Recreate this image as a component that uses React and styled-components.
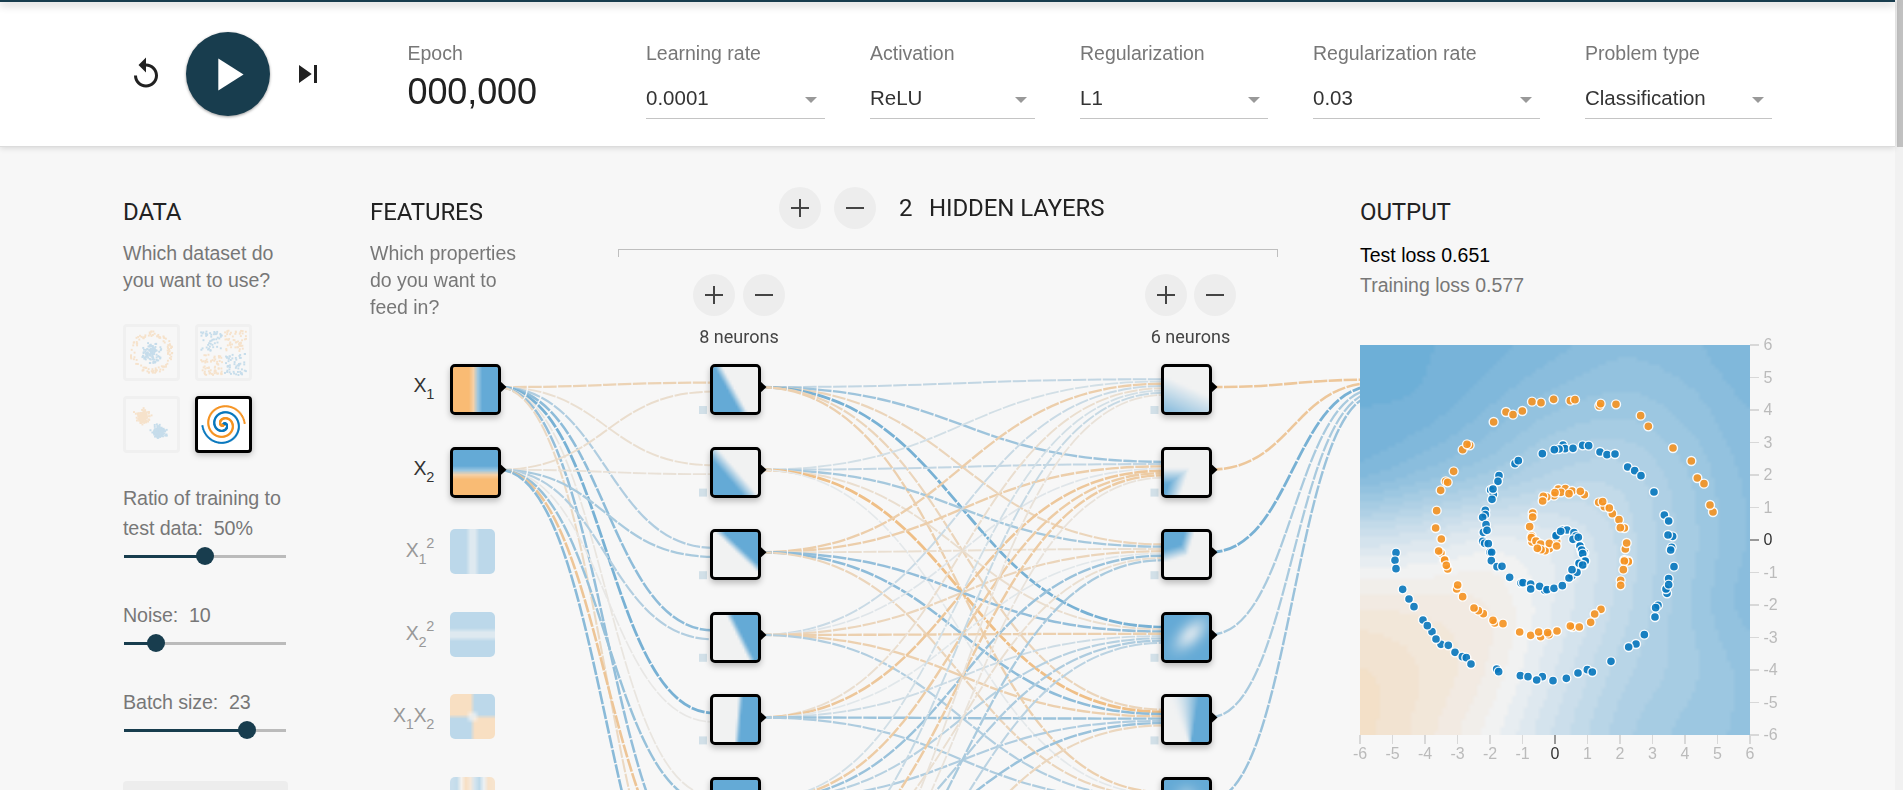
import React, { useLayoutEffect, useRef } from "react";
import styled, { createGlobalStyle } from "styled-components";

const SANS = '"Liberation Sans", Arial, sans-serif';
const ROBOTO = 'Roboto, "Liberation Sans", sans-serif';
const DARK = "#183d4e";

const GlobalStyle = createGlobalStyle`
  *, *::before, *::after { box-sizing: border-box; }
  html, body { margin: 0; padding: 0; overflow: hidden; }
  body { background: #f7f7f7; font-family: ${SANS}; color: rgba(0, 0, 0, 0.87); }
`;

/* ---------- colour helpers ---------- */
const ORANGE = [245, 147, 34];
const GREY = [232, 234, 235];
const BLUE = [8, 119, 189];
const clamp = (v, a = -1, b = 1) => Math.max(a, Math.min(b, v));
function ramp(v) {
  const end = v < 0 ? ORANGE : BLUE;
  const t = Math.abs(clamp(v));
  return GREY.map((c, i) => Math.round(c + (end[i] - c) * t));
}
const rgb = (c) => `rgb(${c.join(",")})`;

/* ---------- page frame ---------- */
const Page = styled.div`
  display: flex;
  width: 1903px;
  height: 790px;
  overflow: hidden;
`;
const Content = styled.div`
  width: 1895px;
  display: flex;
  flex-direction: column;
`;
const ScrollTrack = styled.div`
  width: 8px;
  background: #f1f1f1;
`;
const ScrollThumb = styled.div`
  height: 147px;
  margin-left: 2px;
  background: #c1c1c1;
`;
const TopBar = styled.div`
  position: relative;
  z-index: 3;
  height: 2px;
  background: ${DARK};
  box-shadow: 0 2px 8px rgba(0, 0, 0, 0.45);
`;
const Controls = styled.header`
  position: relative;
  z-index: 2;
  display: flex;
  height: 145px;
  padding-left: 128px;
  background: #fff;
  border-bottom: 1px solid #dcdcdc;
  box-shadow: 0 1px 6px rgba(0, 0, 0, 0.14);
`;
const Timeline = styled.div`
  display: flex;
  align-items: center;
  height: 144px;
  width: 279.5px;
`;
const IconButton = styled.button`
  width: 36px;
  height: 36px;
  padding: 0;
  border: 0;
  background: none;
  color: #212121;
  svg { display: block; width: 36px; height: 36px; }
`;
const PlayButton = styled.button`
  display: flex;
  align-items: center;
  justify-content: center;
  width: 84px;
  height: 84px;
  margin: 0 20px 0 22px;
  padding: 0 2px 0 0;
  border: 0;
  border-radius: 50%;
  background: ${DARK};
  color: #fff;
  box-shadow: 0 1px 3px rgba(0, 0, 0, 0.4);
  svg { width: 55px; height: 55px; }
`;
const Field = styled.div`
  width: ${(p) => p.$w}px;
  margin-right: ${(p) => p.$gap}px;
  padding-top: 40px;
`;
const Label = styled.div`
  font-size: 19.5px;
  line-height: 22px;
  color: #777;
  white-space: nowrap;
`;
const EpochValue = styled.div`
  margin-top: 8px;
  font-size: 36px;
  line-height: 40px;
  letter-spacing: -0.1px;
  color: #212121;
`;
const Select = styled.div`
  display: flex;
  align-items: center;
  justify-content: space-between;
  height: 36px;
  margin-top: 19px;
  padding: 0 8px 5px 0;
  border-bottom: 1px solid #c4c4c4;
  font-size: 20.5px;
  color: #333;
`;
const Caret = styled.i`
  border: 6px solid transparent;
  border-top-color: #999;
  border-bottom: 0;
  margin-top: 3px;
`;

/* ---------- main columns ---------- */
const Main = styled.main`
  position: relative;
  display: flex;
  flex: 1;
  padding-left: 123px;
  overflow: hidden;
`;
const Column = styled.section`
  position: relative;
  width: ${(p) => p.$w}px;
  margin-right: ${(p) => p.$gap || 0}px;
  padding-top: 51px;
  flex-shrink: 0;
`;
const Title = styled.h4`
  margin: 0;
  font: 400 24px/28px ${ROBOTO};
  letter-spacing: -0.1px;
  color: #222;
  white-space: nowrap;
`;
const Hint = styled.p`
  margin: 14px 0 0;
  font-size: 19.5px;
  line-height: 27px;
  letter-spacing: -0.02px;
  color: #777;
  white-space: pre-line;
`;
const Thumbs = styled.div`
  display: grid;
  grid-template-columns: 57px 57px;
  gap: 15px;
  margin-top: 30px;
`;
const Thumb = styled.div`
  width: 57px;
  height: 57px;
  border: 3px solid ${(p) => (p.$on ? "#000" : "#f0f0f0")};
  border-radius: 4px;
  background: ${(p) => (p.$on ? "#fff" : "transparent")};
  box-shadow: ${(p) => (p.$on ? "0 2px 6px rgba(0,0,0,.25)" : "none")};
  svg { display: block; opacity: ${(p) => (p.$on ? 1 : 0.2)}; }
`;
const SliderBlock = styled.div`
  margin-top: ${(p) => p.$mt}px;
`;
const SliderLabel = styled.div`
  font-size: 19.7px;
  line-height: 30px;
  letter-spacing: -0.1px;
  color: #777;
  white-space: pre;
`;
const Track = styled.div`
  display: flex;
  align-items: center;
  width: 162px;
  height: 18px;
  margin: 4px 0 0 1px;
`;
const Filled = styled.div`
  width: ${(p) => p.$w}px;
  height: 3px;
  background: ${DARK};
`;
const Rest = styled.div`
  flex: 1;
  height: 3px;
  background: #bbb;
`;
const Knob = styled.div`
  width: 18px;
  height: 18px;
  margin: 0 -9px;
  border-radius: 50%;
  background: ${DARK};
  z-index: 1;
`;
const Regenerate = styled.button`
  display: block;
  width: 165px;
  height: 50px;
  margin-top: 42px;
  border: 0;
  border-radius: 4px;
  background: #ededed;
`;

const LayerHeader = styled.div`
  display: flex;
  align-items: center;
  height: 42px;
  margin: -11px 0 0 161px;
`;
const Round = styled.button`
  display: flex;
  align-items: center;
  justify-content: center;
  width: 42px;
  height: 42px;
  margin-right: ${(p) => p.$gap || 0}px;
  padding: 0;
  border: 0;
  border-radius: 50%;
  background: #ededed;
  color: #444;
`;
const LayerCount = styled(Title)`
  width: 30px;
`;
const Bracket = styled.div`
  height: 8px;
  margin-top: 19.5px;
  border: 1px solid #bfbfbf;
  border-bottom: 0;
`;
const LayerRow = styled.div`
  display: flex;
  justify-content: space-between;
  margin-top: 17px;
  padding: 0 42px 0 75px;
`;
const LayerBox = styled.div`
  display: flex;
  flex-wrap: wrap;
  width: ${(p) => p.$w}px;
  justify-content: space-between;
`;
const Neurons = styled.div`
  width: 100%;
  padding-top: 10px;
  font: 400 18px/22px ${ROBOTO};
  color: #444;
  text-align: center;
  white-space: nowrap;
`;
const Loss = styled.div`
  font-size: 19.5px;
  line-height: 30px;
  color: ${(p) => (p.$muted ? "#777" : "#000")};
`;
const Losses = styled.div`
  margin-top: 14px;
`;
const Plot = styled.div`
  position: relative;
  width: 390px;
  height: 390px;
  margin-top: 45px;
  background: #fff;
`;
const PlotSvg = styled.svg`
  position: absolute;
  left: 0;
  top: 0;
  overflow: visible;
  font: 16px ${SANS};
`;

/* ---------- network diagram ---------- */
const Network = styled.div`
  position: absolute;
  inset: 0;
  pointer-events: none;
`;
const Links = styled.svg`
  position: absolute;
  left: 0;
  top: 0;
`;
const NodeBox = styled.div`
  position: absolute;
  left: ${(p) => p.$x}px;
  top: ${(p) => p.$y}px;
  width: ${(p) => (p.$off ? 45 : 51)}px;
  height: ${(p) => (p.$off ? 45 : 51)}px;
  border: ${(p) => (p.$off ? "0" : "3px solid #000")};
  border-radius: 5px;
  overflow: hidden;
  background: #fff;
  opacity: ${(p) => (p.$off ? 0.4 : 1)};
  box-shadow: ${(p) => (p.$off ? "none" : "0 3px 6px rgba(0,0,0,.25)")};
`;
const FeatureName = styled.div`
  position: absolute;
  right: 1461px;
  top: ${(p) => p.$y}px;
  font-size: 19.5px;
  line-height: 26px;
  letter-spacing: -0.3px;
  color: ${(p) => (p.$off ? "#999" : "#333")};
  white-space: nowrap;
  sub, sup { font-size: 14.5px; line-height: 0; position: relative; vertical-align: baseline; }
  sub { top: 7px; }
  sup { top: -9px; }
`;
const MapCanvas = styled.canvas`
  display: block;
  width: ${(p) => p.$size}px;
  height: ${(p) => p.$size}px;
`;

/* Draws a scalar field on the unit square, top-left origin. */
function Heat({ fn, size, density, shades }) {
  const ref = useRef(null);
  useLayoutEffect(() => {
    const ctx = ref.current.getContext("2d");
    const img = ctx.createImageData(density, density);
    for (let j = 0; j < density; j++) {
      for (let i = 0; i < density; i++) {
        let v = clamp(fn((i + 0.5) / density, (j + 0.5) / density));
        if (shades) v = (Math.floor(((v + 1) / 2) * shades) / shades) * 2 - 1;
        const c = ramp(v);
        const k = (j * density + i) * 4;
        img.data[k] = c[0];
        img.data[k + 1] = c[1];
        img.data[k + 2] = c[2];
        img.data[k + 3] = 160;
      }
    }
    ctx.putImageData(img, 0, 0);
  }, [fn, density, shades]);
  return <MapCanvas ref={ref} width={density} height={density} $size={size} />;
}

const pos = (v) => clamp(v, 0, 1);
const FEATURES = [
  { name: <>X<sub>1</sub></>, fn: (x) => (x - 0.5) * 12 },
  { name: <>X<sub>2</sub></>, fn: (x, y) => (0.5 - y) * 12 },
  { name: <>X<sub>1</sub><sup>2</sup></>, off: true, fn: (x) => 0.4 + Math.max(0, Math.abs(x - 0.5) - 0.07) * 9 },
  { name: <>X<sub>2</sub><sup>2</sup></>, off: true, fn: (x, y) => 0.4 + Math.max(0, Math.abs(y - 0.5) - 0.07) * 9 },
  { name: <>X<sub>1</sub>X<sub>2</sub></>, off: true, fn: (x, y) => (x - 0.5) * (0.5 - y) * 140 },
  { name: <>sin(X<sub>1</sub>)</>, off: true, fn: (x) => Math.sin(12 * x - 6) },
];
const LAYER1 = [
  (x, y) => pos((0.21 + 0.56 * y - x) / 0.18),
  (x, y) => pos((0.14 + 0.86 * y - x) / 0.34),
  (x, y) => pos((x - 0.04 - 1.06 * y) / 0.2),
  (x, y) => pos((x - 0.29 - 0.5 * y) / 0.14),
  (x, y) => pos((x - 0.56 + 0.08 * y) / 0.1),
  () => 1,
];
const LAYER2 = [
  (x, y) => pos((y - 0.2 - 0.45 * x) * 0.95),
  (x, y) => pos(Math.min((y - 0.4) / 0.35, (0.54 - 0.35 * (y - 0.5) - x) / 0.35)),
  (x, y) => pos(Math.min((0.68 - 0.3 * y - x) / 0.22, (0.68 - 0.3 * x - y) / 0.28)),
  (x, y) => {
    const along = (x - 0.58 - (y - 0.42)) / 1.414;
    const across = (x - 0.56 + (y - 0.46)) / 1.414;
    return 1 - 0.76 * Math.exp(-((along / 0.42) ** 2) - (across / 0.23) ** 2);
  },
  (x, y) => {
    const x0 = 0.1 + 0.42 * y;
    return pos((x - x0) / (0.78 - 0.17 * y - x0)) ** 1.8;
  },
  (x, y) => 1 - 0.3 * Math.exp(-(((x - 0.5) / 0.25) ** 2) - ((y - 0.3) / 0.2) ** 2),
];

const FIELD = [
  [0.98, 0.94, 0.89, 0.82, 0.75, 0.78, 0.86],
  [0.93, 0.9, 0.79, 0.67, 0.62, 0.69, 0.8],
  [0.81, 0.7, 0.58, 0.45, 0.43, 0.59, 0.75],
  [0.25, 0.2, 0.12, 0.17, 0.35, 0.56, 0.74],
  [-0.12, -0.1, -0.06, 0.14, 0.36, 0.58, 0.76],
  [-0.27, -0.19, -0.05, 0.2, 0.43, 0.57, 0.69],
  [-0.29, -0.16, 0.03, 0.28, 0.5, 0.62, 0.68],
];
const cubic = (a, b, c, d, t) =>
  b + 0.5 * t * (c - a + t * (2 * a - 5 * b + 4 * c - d + t * (3 * (b - c) + d - a)));
function outputField(x, y) {
  const u = x * 6;
  const w = y * 6;
  const i = Math.min(5, Math.floor(u));
  const j = Math.min(5, Math.floor(w));
  const at = (r, c) => FIELD[clamp(r, 0, 6)][clamp(c, 0, 6)];
  const row = (r) => cubic(at(r, i - 1), at(r, i), at(r, i + 1), at(r, i + 2), u - i);
  return cubic(row(j - 1), row(j), row(j + 1), row(j + 2), w - j);
}

const nodeY = (i) => 387.1 + 82.6 * i;
const W1 = [
  [-0.27, -0.13, 0.25, 0.4, 0.5, -0.06, 0.38, -0.2],
  [-0.15, -0.1, 0.28, 0.24, -0.03, 0.36, -0.42, 0.42],
];
const W2 = [
  [0.17, 0.33, -0.24, 0.5, -0.24, -0.3],
  [0.1, 0.17, 0.3, -0.14, -0.5, 0.02],
  [-0.32, -0.32, -0.13, 0.38, 0.4, -0.24],
  [0.14, 0.04, -0.24, -0.3, -0.3, 0.24],
  [-0.14, -0.4, 0.03, 0.12, 0.34, 0.26],
  [0.1, -0.35, 0.35, 0.22, 0.25, 0.3],
  [0.15, -0.36, -0.13, 0.26, 0.35, 0.3],
  [-0.09, -0.08, 0.28, 0.2, -0.22, 0.3],
];
const W3 = [[-0.4], [-0.4], [0.5], [0.28], [0.28], [0.35]];

function layerLinks(weights, x0, x1) {
  const n = weights.length;
  const out = [];
  weights.forEach((row, i) =>
    row.forEach((w, j) => {
      const y0 = nodeY(i);
      const y1 = nodeY(j) + ((i - (n - 1) / 2) / n) * 18;
      const m = (x0 + x1) / 2;
      out.push({ d: `M${x0},${y0}C${m},${y0} ${m},${y1} ${x1},${y1}`, w });
    })
  );
  return out;
}
const LINKS = [
  ...layerLinks(W1, 498, 714),
  ...layerLinks(W2, 758, 1164),
  ...layerLinks(W3, 1209, 1377),
];

const TOP = 147;
const boxTop = (i) => Math.round(364 + 82.6 * i) - TOP;

function NetworkDiagram() {
  const sources = [
    [501, 2],
    [761, 6],
    [1212, 6],
  ];
  return (
    <Network>
      <Links width="1400" height="643" viewBox="0 147 1400 643">
        {LINKS.map((l, i) => (
          <path key={i} d={l.d} fill="none" stroke={rgb(ramp(l.w))}
            strokeWidth={1.6 + Math.abs(l.w) * 2.4} strokeDasharray="13.5 1.5" />
        ))}
        {[699, 1150.5].map((x) =>
          [0, 1, 2, 3, 4].map((i) => (
            <rect key={x + "-" + i} x={x} y={406 + 82.6 * i} width="8" height="8" fill="#d2e0e8" />
          ))
        )}
        {sources.map(([x, n]) =>
          Array.from({ length: n }, (_, i) => (
            <path key={x + "-" + i} fill="#000"
              d={`M${x - 1},${nodeY(i) - 6}L${x + 5.5},${nodeY(i)}L${x - 1},${nodeY(i) + 6}Z`} />
          ))
        )}
      </Links>
      {FEATURES.map((f, i) => (
        <React.Fragment key={i}>
          <FeatureName $y={boxTop(i) + 8} $off={f.off}>{f.name}</FeatureName>
          <NodeBox $x={450} $y={boxTop(i)} $off={f.off}>
            <Heat fn={f.fn} size={45} density={10} />
          </NodeBox>
        </React.Fragment>
      ))}
      {LAYER1.map((fn, i) => (
        <NodeBox key={i} $x={710} $y={boxTop(i)}><Heat fn={fn} size={45} density={20} /></NodeBox>
      ))}
      {LAYER2.map((fn, i) => (
        <NodeBox key={i} $x={1161} $y={boxTop(i)}><Heat fn={fn} size={45} density={20} /></NodeBox>
      ))}
    </Network>
  );
}

/* ---------- output points, in thirds of a pixel from each quadrant's corner ---------- */
const O1 = [461,276,498,246,519,254,547,243,576,215,603,218,641,208,691,212,705,209,389,346,368,359,381,343,341,424,317,454,323,457,302,481,290,542,287,594,304,627,303,669,296,663,314,690,655,477,676,476,696,483,663,487,642,497,645,488,687,491,733,494,721,484,620,501,610,499,608,513,578,549,578,561,569,590,575,618,576,636,574,623,588,633,602,642,650,634,628,656,615,662,603,659,592,655,628,640,650,648];
const B1 = [168,668,525,401,535,392,607,371,669,345,675,356,657,357,643,359,699,355,728,346,746,347,477,437,474,454,452,480,460,493,459,477,456,508,436,541,436,554,428,562,438,584,430,607,441,601,428,634,434,640,445,641,450,667,455,667,650,616,648,617,669,600,681,600,662,604,702,608,708,618,699,628,715,622,720,648,725,664,733,668,729,671];
const O2 = [118,228,122,221,168,223,242,257,265,289,339,354,394,393,412,444,432,461,459,546,450,525,116,517,133,530,128,515,157,551,148,534,177,569,193,594,181,593,196,657,200,639,204,692,193,690];
const B2 = [120,366,141,374,165,372,203,411,224,422,243,437,282,486,313,555,326,573,338,619,324,615,335,652,332,660,60,648,65,660,68,671];
const O3 = [314,30,323,57,319,46,350,117,353,105,368,140,430,191,415,182,402,174,464,219,459,211,489,221,539,246,572,256,602,260,596,246,627,254,623,248,651,243,698,231,691,228,718,231];
const B3 = [165,31,168,56,188,118,207,147,222,170,249,210,276,245,262,227,303,283,288,267,325,286,345,307,367,320,379,323,393,342,470,357,476,365,541,377,564,380,607,380,590,390,639,392,679,385,714,369,742,359,454,32,471,50,486,49,509,82,543,99,549,98,572,102,572,117,614,121,599,109,621,119,642,115,667,107,696,77,687,84,711,67,696,59,730,45,733,33,718,40];
const O4 = [205,35,193,33,190,59,182,91,182,106,123,178,104,192,92,217];
const B4 = [342,50,326,86,321,130,318,117,326,104,294,166,287,173,285,201,253,254,228,282,206,291,153,334,97,366,76,33,57,40,68,45];
function collect(list, ox, oy, color) {
  const pts = [];
  for (let i = 0; i < list.length; i += 2) pts.push({ x: ox + list[i] / 3, y: oy + list[i + 1] / 3, color });
  return pts;
}
const POINTS = [
  ...collect(O1, -20, -15, "#f59322"), ...collect(B1, -20, -15, "#0877bd"),
  ...collect(O2, 200, -15, "#f59322"), ...collect(B2, 200, -15, "#0877bd"),
  ...collect(O3, -20, 205, "#f59322"), ...collect(B3, -20, 205, "#0877bd"),
  ...collect(O4, 200, 205, "#f59322"), ...collect(B4, 200, 205, "#0877bd"),
];
const TICKS = Array.from({ length: 13 }, (_, i) => i - 6);

function OutputPlot() {
  return (
    <Plot>
      <Heat fn={outputField} size={390} density={100} shades={30} />
      <PlotSvg width="390" height="390">
        {POINTS.map((p, i) => (
          <circle key={i} cx={p.x} cy={p.y} r="4.5" fill={p.color} stroke="#fff" strokeWidth="1.4" opacity="0.9" />
        ))}
        {TICKS.map((t) => {
          const at = 195 + t * 32.5;
          const wide = t % 2 === 0 ? 2 : 1;
          const line = t === 0 ? "#999" : "#d8d8d8";
          const ink = t === 0 ? "#333" : "#bbb";
          return (
            <g key={t}>
              <rect x={Math.round(at - wide / 2)} y="390" width={wide} height="9" fill={line} />
              <text x={at} y="413.5" textAnchor="middle" fill={ink}>{t}</text>
              <rect x="390" y={Math.round(390 - at - wide / 2)} width="9" height={wide} fill={line} />
              <text x="403.5" y={390 - at + 5.3} fill={ink}>{t}</text>
            </g>
          );
        })}
      </PlotSvg>
    </Plot>
  );
}

/* ---------- dataset thumbnails ---------- */
function random(seed) {
  let s = seed;
  return () => {
    s = (s * 16807) % 2147483647;
    return s / 2147483647;
  };
}
function dataset(kind) {
  const r = random(kind.length * 7919 + 17);
  const gauss = () => Math.sqrt(-2 * Math.log(r() + 1e-6)) * Math.cos(2 * Math.PI * r());
  const pts = [];
  if (kind === "circle") {
    for (let i = 0; i < 110; i++) {
      const a = r() * 2 * Math.PI, d = r() * 2.5;
      pts.push([d * Math.sin(a), d * Math.cos(a), 1]);
      const b = r() * 2 * Math.PI, e = 3.8 + r() * 1.2;
      pts.push([e * Math.sin(b), e * Math.cos(b), 0]);
    }
  } else if (kind === "xor") {
    for (let i = 0; i < 220; i++) {
      let x = r() * 10 - 5, y = r() * 10 - 5;
      x += x > 0 ? 0.3 : -0.3;
      y += y > 0 ? 0.3 : -0.3;
      pts.push([x, y, x * y < 0 ? 1 : 0]);
    }
  } else if (kind === "gauss") {
    for (let i = 0; i < 130; i++) {
      pts.push([1.8 + gauss() * 0.7, -1.8 + gauss() * 0.7, 1]);
      pts.push([-1.9 + gauss() * 0.7, 1.9 + gauss() * 0.7, 0]);
    }
  } else {
    for (let i = 0; i < 150; i++) {
      const d = (i / 150) * 5, t = 1.75 * (i / 150) * 2 * Math.PI;
      pts.push([d * Math.sin(t), d * Math.cos(t), 1]);
      pts.push([-d * Math.sin(t), -d * Math.cos(t), 0]);
    }
  }
  return pts;
}
function DatasetThumb({ kind, on }) {
  return (
    <Thumb $on={on}>
      <svg width="51" height="51">
        {dataset(kind).map(([x, y, c], i) => (
          <rect key={i} x={24.6 + x * 4.25} y={24.6 - y * 4.25} width="1.9" height="1.9" fill={c ? "#0877bd" : "#f59322"} />
        ))}
      </svg>
    </Thumb>
  );
}

/* ---------- small parts ---------- */
function Icon({ d }) {
  return <svg viewBox="0 0 24 24" fill="currentColor"><path d={d} /></svg>;
}
function Plus({ gap }) {
  return (
    <Round $gap={gap}>
      <svg width="18" height="18"><path d="M0 9H18M9 0V18" stroke="currentColor" strokeWidth="2" /></svg>
    </Round>
  );
}
function Minus({ gap }) {
  return (
    <Round $gap={gap}>
      <svg width="18" height="18"><path d="M0 9H18" stroke="currentColor" strokeWidth="2" /></svg>
    </Round>
  );
}
function Slider({ label, fill, mt }) {
  return (
    <SliderBlock $mt={mt}>
      <SliderLabel>{label}</SliderLabel>
      <Track><Filled $w={fill} /><Knob /><Rest /></Track>
    </SliderBlock>
  );
}
function Dropdown({ label, value, w, gap }) {
  return (
    <Field $w={w} $gap={gap}>
      <Label>{label}</Label>
      <Select>{value}<Caret /></Select>
    </Field>
  );
}

export default function App() {
  return (
    <Page>
      <GlobalStyle />
      <Content>
        <TopBar />
        <Controls>
          <Timeline>
            <IconButton><Icon d="M12 5V1L7 6l5 5V7c3.31 0 6 2.69 6 6s-2.69 6-6 6-6-2.69-6-6H4c0 4.42 3.58 8 8 8s8-3.58 8-8-3.58-8-8-8z" /></IconButton>
            <PlayButton><Icon d="M8 5v14l11-7z" /></PlayButton>
            <IconButton><Icon d="M6 18l8.500-6L6 6v12zM16 6v12h2V6h-2z" /></IconButton>
          </Timeline>
          <Field $w={193.5} $gap={45}>
            <Label>Epoch</Label>
            <EpochValue>000,000</EpochValue>
          </Field>
          <Dropdown label="Learning rate" value="0.0001" w={179} gap={45} />
          <Dropdown label="Activation" value="ReLU" w={165} gap={45} />
          <Dropdown label="Regularization" value="L1" w={188} gap={45} />
          <Dropdown label="Regularization rate" value="0.03" w={227} gap={45} />
          <Dropdown label="Problem type" value="Classification" w={187} gap={0} />
        </Controls>
        <Main>
          <NetworkDiagram />
          <Column $w={165} $gap={82}>
            <Title>DATA</Title>
            <Hint>{"Which dataset do\nyou want to use?"}</Hint>
            <Thumbs>
              <DatasetThumb kind="circle" />
              <DatasetThumb kind="xor" />
              <DatasetThumb kind="gauss" />
              <DatasetThumb kind="spiral" on />
            </Thumbs>
            <Slider label={"Ratio of training to\ntest data:  50%"} fill={81} mt={30} />
            <Slider label="Noise:  10" fill={32} mt={35} />
            <Slider label="Batch size:  23" fill={123} mt={35} />
            <Regenerate />
          </Column>
          <Column $w={165} $gap={83}>
            <Title>FEATURES</Title>
            <Hint>{"Which properties\ndo you want to\nfeed in?"}</Hint>
          </Column>
          <Column $w={660} $gap={82}>
            <LayerHeader>
              <Plus gap={13} />
              <Minus gap={23} />
              <LayerCount>2</LayerCount>
              <Title>HIDDEN LAYERS</Title>
            </LayerHeader>
            <Bracket />
            <LayerRow>
              <LayerBox $w={92}><Plus /><Minus /><Neurons>8 neurons</Neurons></LayerBox>
              <LayerBox $w={91}><Plus /><Minus /><Neurons>6 neurons</Neurons></LayerBox>
            </LayerRow>
          </Column>
          <Column $w={390}>
            <Title>OUTPUT</Title>
            <Losses>
              <Loss>Test loss 0.651</Loss>
              <Loss $muted>Training loss 0.577</Loss>
            </Losses>
            <OutputPlot />
          </Column>
        </Main>
      </Content>
      <ScrollTrack><ScrollThumb /></ScrollTrack>
    </Page>
  );
}
